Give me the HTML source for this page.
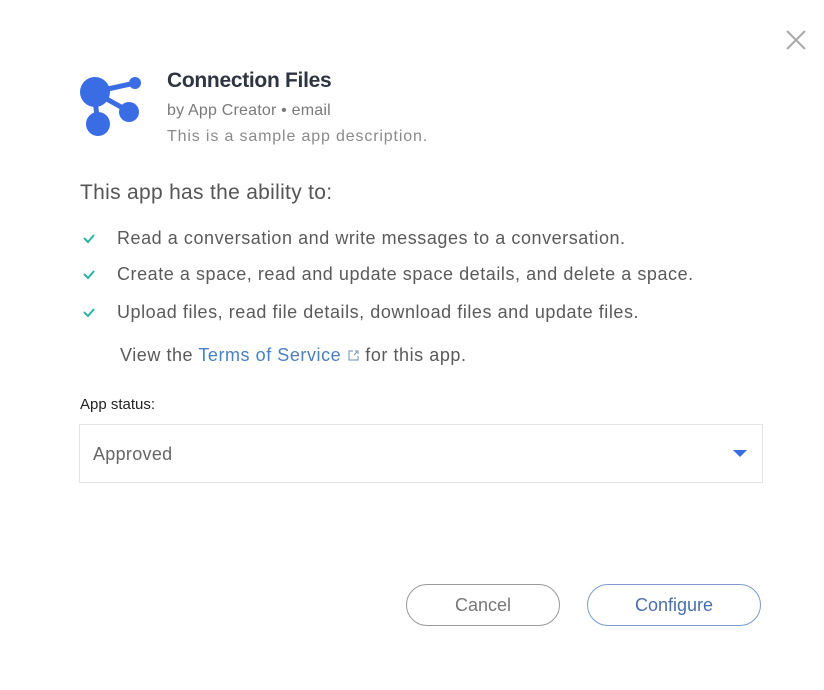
<!DOCTYPE html>
<html><head><style>
body{margin:0;width:824px;height:690px;background:#fff;font-family:"Liberation Sans",sans-serif;position:relative;overflow:hidden;color:#555}
.a{position:absolute;white-space:nowrap}
.li{font-size:18px;letter-spacing:0.55px;color:#5a5a5a}
.btn{position:absolute;top:584px;height:42px;border-radius:22px;box-sizing:border-box;text-align:center;line-height:40px;font-size:18px}
</style></head><body>
<svg class="a" style="left:784px;top:28px" width="24" height="24" viewBox="0 0 24 24"><path d="M3 3L21 21M21 3L3 21" stroke="#aaa" stroke-width="2"/></svg>
<svg class="a" style="left:78px;top:72px" width="70" height="66" viewBox="78 72 70 66">
<g stroke="#3a6de3" stroke-width="5" fill="none"><path d="M94 92L135 83M94 92L130 112M98 124L94 92"/></g>
<g fill="#3a6de3"><circle cx="95" cy="92" r="15"/><circle cx="135" cy="83" r="6"/><circle cx="129" cy="112" r="10"/><circle cx="98" cy="124" r="12"/></g></svg>
<div class="a" style="left:167px;top:69px;font-size:21px;color:#2e3440;font-weight:bold;letter-spacing:-0.3px">Connection Files</div>
<div class="a" style="left:167px;top:102px;font-size:16px;letter-spacing:0.2px;color:#7a7a7a">by App Creator • email</div>
<div class="a" style="left:167px;top:128px;font-size:16px;letter-spacing:0.85px;color:#8a8a8a">This is a sample app description.</div>
<div class="a" style="left:80px;top:181px;font-size:21px;letter-spacing:0.3px;color:#555">This app has the ability to:</div>
<svg class="a" style="left:82px;top:232px" width="14" height="12"><path d="M2 6L6 10L12 3" stroke="#2db4a0" stroke-width="2" fill="none"/></svg>
<div class="a li" style="left:117px;top:228px">Read a conversation and write messages to a conversation.</div>
<svg class="a" style="left:82px;top:268px" width="14" height="12"><path d="M2 6L6 10L12 3" stroke="#2db4a0" stroke-width="2" fill="none"/></svg>
<div class="a li" style="left:117px;top:264px">Create a space, read and update space details, and delete a space.</div>
<svg class="a" style="left:82px;top:306px" width="14" height="12"><path d="M2 6L6 10L12 3" stroke="#2db4a0" stroke-width="2" fill="none"/></svg>
<div class="a li" style="left:117px;top:302px">Upload files, read file details, download files and update files.</div>
<div class="a li" style="left:120px;top:345px">View the <span style="color:#4a7fc0">Terms of Service</span> <svg width="13" height="13" viewBox="0 0 13 13" style="vertical-align:-1px"><path d="M6 2H2V11H11V7M7 6L11 2M8 2H11V5" stroke="#8aa0c0" stroke-width="1.2" fill="none"/></svg> for this app.</div>
<div class="a" style="left:80px;top:396px;font-size:15px;color:#222">App status:</div>
<div class="a" style="left:79px;top:424px;width:684px;height:59px;border:1px solid #e3e3e3;box-sizing:border-box"></div>
<div class="a" style="left:93px;top:444px;font-size:18px;letter-spacing:0.3px;color:#666">Approved</div>
<svg class="a" style="left:733px;top:450px" width="14" height="8"><path d="M0 0H14L7 7Z" fill="#3a6de3"/></svg>
<div class="btn" style="left:406px;width:154px;border:1.5px solid #999;color:#777">Cancel</div>
<div class="btn" style="left:587px;width:174px;border:1.5px solid #7c9ccc;color:#4a6fa8">Configure</div>
</body></html>
